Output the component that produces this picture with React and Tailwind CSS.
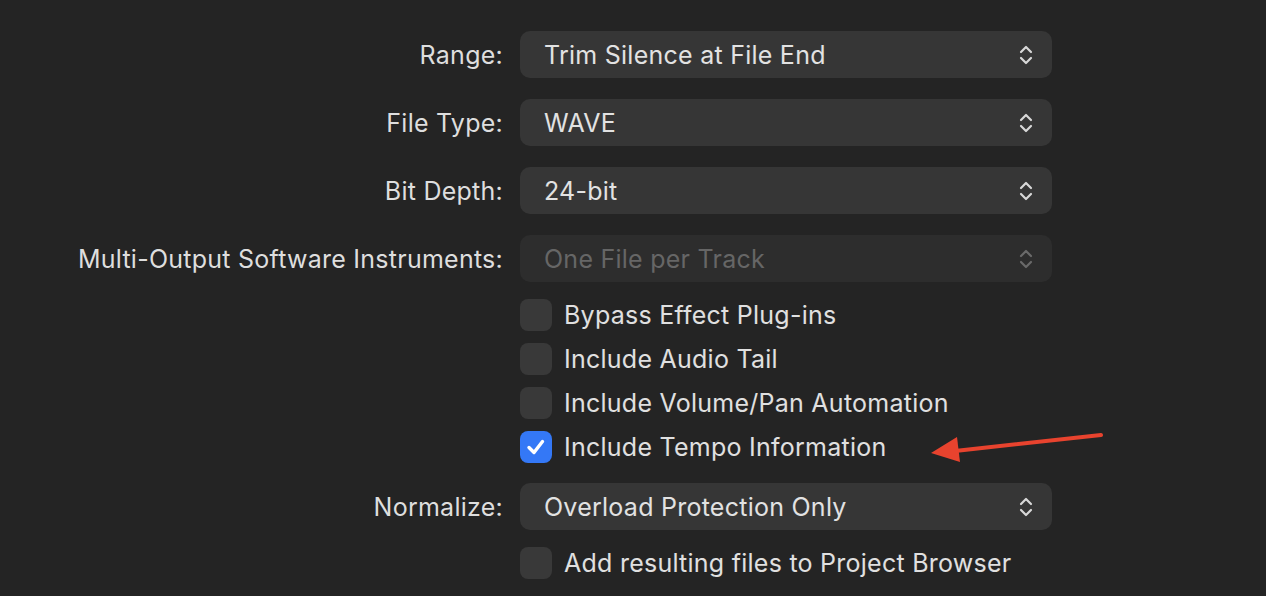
import React from 'react'

const font = { fontFamily: 'Inter, "Noto Sans", "Liberation Sans", sans-serif' }

function Chevrons({ dim }) {
  return (
    <svg width="16" height="24" viewBox="0 0 16 24" fill="none" className={dim ? 'text-[#6a6a6a]' : 'text-[#d8d8d8]'}>
      <path d="M3 9 L8 4 L13 9" stroke="currentColor" strokeWidth="2.2" strokeLinecap="round" strokeLinejoin="round" />
      <path d="M3 15 L8 20 L13 15" stroke="currentColor" strokeWidth="2.2" strokeLinecap="round" strokeLinejoin="round" />
    </svg>
  )
}

function Popup({ label, value, disabled, className = '' }) {
  return (
    <div className={`flex items-center ${className}`}>
      <div className="w-[503px] pt-[2px] text-right text-[25px] tracking-[0.01em] text-[#dedede]">{label}</div>
      <div className={`ml-[17px] flex h-[47px] w-[532px] items-center justify-between rounded-[10px] pl-[24px] pr-[18px] text-[25px] tracking-[0.01em] ${disabled ? 'bg-[#2d2d2d] text-[#666666]' : 'bg-[#363636] text-[#e2e2e2]'}`}>
        <span className="pt-[2px]">{value}</span>
        <Chevrons dim={disabled} />
      </div>
    </div>
  )
}

function Check({ label, checked, className = '' }) {
  return (
    <div className={`ml-[520px] flex h-[32px] items-center ${className}`}>
      <div className={`flex h-[32px] w-[32px] items-center justify-center rounded-[8px] ${checked ? 'bg-[#3478f6]' : 'bg-[#393939]'}`}>
        {checked && (
          <svg width="24" height="24" viewBox="0 0 24 24" fill="none">
            <path d="M5 12.5 L10 17.5 L18.5 6.5" stroke="white" strokeWidth="3.4" strokeLinecap="round" strokeLinejoin="round" />
          </svg>
        )}
      </div>
      <span className="ml-[12px] pt-[2px] text-[25px] tracking-[0.01em] text-[#e0e0e0]">{label}</span>
    </div>
  )
}

export default function App() {
  return (
    <div className="relative h-[596px] w-[1266px] overflow-hidden bg-[#242424]" style={font}>
      <div className="flex flex-col pt-[31px]">
        <Popup label="Range:" value="Trim Silence at File End" />
        <Popup label="File Type:" value="WAVE" className="mt-[21px]" />
        <Popup label="Bit Depth:" value="24-bit" className="mt-[21px]" />
        <Popup label="Multi-Output Software Instruments:" value="One File per Track" disabled className="mt-[21px]" />
        <Check label="Bypass Effect Plug-ins" className="mt-[17px]" />
        <Check label="Include Audio Tail" className="mt-[12px]" />
        <Check label="Include Volume/Pan Automation" className="mt-[12px]" />
        <Check label="Include Tempo Information" checked className="mt-[12px]" />
        <Popup label="Normalize:" value="Overload Protection Only" className="mt-[20px]" />
        <Check label="Add resulting files to Project Browser" className="mt-[17px]" />
      </div>
      <svg className="absolute left-0 top-0" width="1266" height="596" viewBox="0 0 1266 596">
        <path d="M1101 435 L955 451" stroke="#e8432e" strokeWidth="4" strokeLinecap="round" />
        <path d="M931 453 L957 437 L960 462 Z" fill="#e8432e" />
      </svg>
    </div>
  )
}
